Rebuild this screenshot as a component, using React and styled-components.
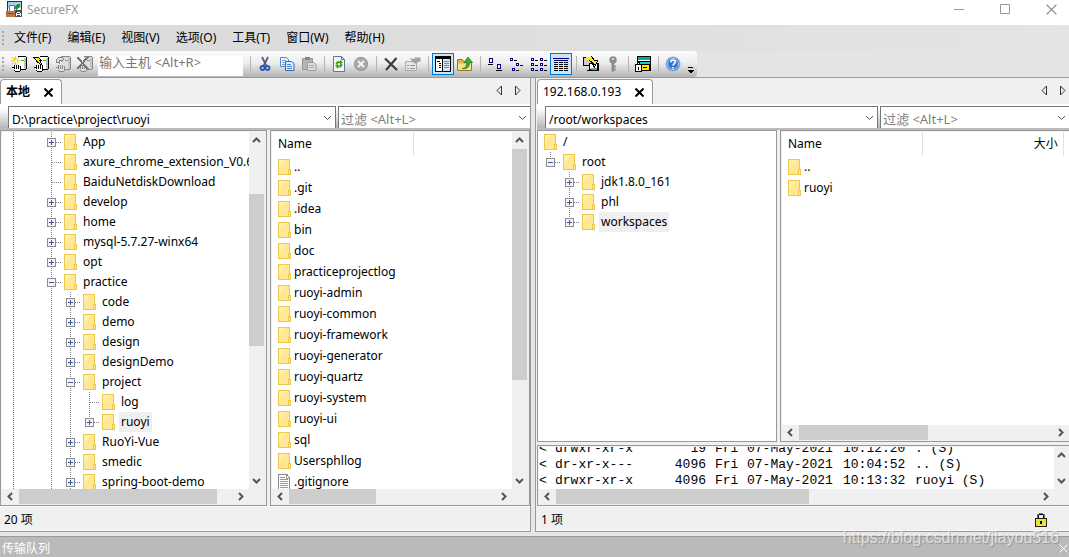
import React from 'react';
import styled, { createGlobalStyle } from 'styled-components';

const GlobalStyle = createGlobalStyle`
  * {
    box-sizing: border-box;
  }

  body {
    margin: 0;
    overflow: hidden;
    background: #e3e3e3;
    color: #000;
    font-family: "Noto Sans", "Noto Sans CJK SC", sans-serif;
    font-size: 12px;
    line-height: 20px;
  }

  button, input {
    font: inherit;
    color: inherit;
    border: 0;
    padding: 0;
    margin: 0;
    background: none;
    border-radius: 0;
  }

  ul {
    list-style: none;
    margin: 0;
    padding: 0;
  }

  svg {
    display: block;
    flex: none;
  }
`;

/* ---------- frame ---------- */

const Window = styled.div`
  height: 100vh;
  display: flex;
  flex-direction: column;
`;

const TitleBar = styled.header`
  display: flex;
  align-items: flex-start;
  height: 25px;
  padding: 1px 0 0 6px;
  background: #fff;
  color: #999;

  h1 {
    flex: 1;
    margin: 0 0 0 5px;
    font-size: 12px;
    font-weight: 400;
    line-height: 18px;
  }
`;

const WindowButton = styled.button`
  width: 46px;
  height: 16px;
  display: flex;
  align-items: center;
  justify-content: center;

  &:last-child {
    width: 41px;
    padding-left: 18px;
    justify-content: flex-start;
  }
`;

const MenuBar = styled.nav`
  display: flex;
  align-items: center;
  gap: 16px;
  height: 26px;
  padding-left: 2px;
  background: linear-gradient(90deg, #dadada, #e4e4e4);
`;

const Grip = styled.span`
  width: 2px;
  height: 14px;
  flex: none;
  margin-right: ${(props) => props.$gap || 0}px;
  background: repeating-linear-gradient(#a8a8a8 0 2px, transparent 2px 4px);
`;

const ToolbarRow = styled.div`
  display: flex;
  height: 27px;
  background: #e4e4e4;
  border-bottom: 1px solid #9a9a9a;
`;

const Toolbar = styled.div`
  display: flex;
  align-items: center;
  height: 26px;
  padding-left: 2px;
  border-radius: 0 4px 4px 0;
  background: linear-gradient(#fcfcfc, #eee 45%, #b4b4b4);
`;

const ToolButton = styled.button`
  width: 22px;
  height: 22px;
  display: flex;
  align-items: center;
  justify-content: center;
  border: 1px solid ${(props) => (props.$active ? '#0078d7' : 'transparent')};
  background: ${(props) => (props.$active ? '#cfe3f5' : 'transparent')};
`;

const Separator = styled.span`
  width: 8px;
  height: 16px;
  background: linear-gradient(90deg, transparent 4px, #b5b5b5 4px, #b5b5b5 5px, transparent 5px);
`;

const HostInput = styled.input`
  width: 145px;
  height: 20px;
  margin: 3px 3px 0 2px;
  padding: 0 1px 8px;
  background: #fff;
  font-size: 13px;

  &::placeholder {
    color: #777;
    opacity: 1;
  }
`;

const Overflow = styled.button`
  width: 13px;
  height: 26px;
  display: flex;
  align-items: flex-end;
  justify-content: center;
  padding-bottom: 3px;
`;

/* ---------- panels ---------- */

const Workspace = styled.main`
  flex: 1;
  min-height: 0;
  display: grid;
  grid-template-columns: 531fr 534fr;
  grid-template-rows: minmax(0, 1fr);
  column-gap: 4px;
  padding-bottom: 4px;
  background: #e6e6e6;
`;

const Panel = styled.section`
  min-width: 0;
  display: flex;
  flex-direction: column;
  background: #f0f0f0;
  border: solid #999;
  border-width: ${(props) => (props.$remote ? '0 0 1px 1px' : '0 1px 1px 0')};
  padding-left: ${(props) => (props.$remote ? 1 : 0)}px;
`;

const TabRow = styled.div`
  display: flex;
  align-items: flex-end;
  justify-content: space-between;
  height: 26px;
`;

const Tab = styled.div`
  display: flex;
  align-items: center;
  gap: 14px;
  height: 25px;
  padding: 0 8px 0 5px;
  background: #fff;
  border: 1px solid #999;
  border-bottom: 0;
  border-radius: 4px 4px 0 0;
  font-weight: ${(props) => (props.$active ? 700 : 400)};
`;

const TabArrows = styled.div`
  display: flex;
  gap: 9px;
  padding: 0 ${(props) => (props.$active ? 8 : 2)}px 9px 0;

  button {
    width: 9px;
    height: 9px;
  }
`;

const AddressBar = styled.div`
  display: grid;
  grid-template-columns: ${(props) => props.$columns};
  column-gap: 2px;
  height: 26px;
  padding: 2px 0 0 8px;
  background: linear-gradient(#fff 2px, #fafafa 6px, #b6b6b6);
  border-bottom: 2px solid #bbb;
`;

const Combo = styled.div`
  display: flex;
  align-items: center;
  min-width: 0;
  background: #fff;
  border: solid #777;
  border-width: 1px 0 0 1px;

  &:not(:last-child) {
    border-right-width: 1px;
  }

  input {
    flex: 1;
    min-width: 0;
    height: 20px;
    padding: 4px 3px 0;
    outline: none;
  }

  input[placeholder] {
    padding: 3px 2px 0;
    font-size: 13px;
  }

  input::placeholder {
    color: #808080;
    opacity: 1;
  }

  button {
    width: 16px;
    height: 20px;
    display: flex;
    align-items: center;
    justify-content: center;
  }
`;

const Panes = styled.div`
  flex: 1;
  min-height: 0;
  display: grid;
  grid-template-columns: ${(props) => props.$columns};
  grid-template-rows: minmax(0, 1fr);
  column-gap: 3px;
`;

const Pane = styled.div`
  min-width: 0;
  min-height: 0;
  display: grid;
  grid-template-columns: minmax(0, 1fr) ${(props) => (props.$vertical ? '15px' : '')};
  grid-template-rows: minmax(0, 1fr) ${(props) => (props.$horizontal ? '15px' : '')};
  padding: 1px ${(props) => (props.$vertical && !props.$cut ? 2 : 0)}px 1px 1px;
  background: ${(props) => (props.$vertical || props.$horizontal ? '#f0f0f0' : '#fff')};
  border: 1px solid #999;
  border-right-width: ${(props) => (props.$cut ? 0 : 1)}px;
`;

const Content = styled.div`
  overflow: hidden;
  background: #fff;
`;

const Status = styled.footer`
  display: flex;
  align-items: center;
  justify-content: space-between;
  height: 25px;
  padding: 2px 22px 0 4px;
  border: solid #fafafa;
  border-width: 1px 0;
`;

const Queue = styled.footer`
  display: flex;
  align-items: center;
  justify-content: space-between;
  height: 21px;
  padding: 3px 1px 0 2px;
  background: #bababa;
  border-top: 1px solid #999;
  color: #fff;
`;

const Watermark = styled.div`
  position: absolute;
  right: 10px;
  bottom: 8px;
  color: rgba(255, 255, 255, 0.65);
  text-shadow: 1px 1px 1px rgba(110, 110, 110, 0.5);
  font: 16px/22px "Liberation Sans", sans-serif;
  pointer-events: none;
`;

/* ---------- scrollbar ---------- */

const Bar = styled.div`
  display: flex;
  flex-direction: ${(props) => (props.$vertical ? 'column' : 'row')};
  background: #f0f0f0;

  button {
    flex: none;
    width: ${(props) => (props.$vertical ? 15 : 17)}px;
    height: ${(props) => (props.$vertical ? 17 : 15)}px;
    display: flex;
    align-items: center;
    justify-content: center;
  }
`;

const Space = styled.span`
  flex: ${(props) => props.$grow} 1 0;
`;

const Thumb = styled(Space)`
  background: #cdcdcd;
`;

const chevrons = {
  up: 'M1 6 4.500 2.500 8 6',
  down: 'M1 3 4.500 6.500 8 3',
  left: 'M6 1 2.500 4.500 6 8',
  right: 'M3 1 6.500 4.500 3 8',
};

const Chevron = ({ to, width = 2, color = '#555' }) => (
  <svg width="9" height="9" viewBox="0 0 9 9" fill="none" stroke={color} strokeWidth={width}>
    <path d={chevrons[to]} />
  </svg>
);

// track is [before, thumb, after], as parts of the whole
const ScrollBar = ({ vertical, track }) => (
  <Bar $vertical={vertical}>
    <button aria-label={vertical ? 'Scroll up' : 'Scroll left'}>
      <Chevron to={vertical ? 'up' : 'left'} />
    </button>
    <Space $grow={track[0]} />
    <Thumb $grow={track[1]} />
    <Space $grow={track[2]} />
    <button aria-label={vertical ? 'Scroll down' : 'Scroll right'}>
      <Chevron to={vertical ? 'down' : 'right'} />
    </button>
  </Bar>
);

/* ---------- tree and file list ---------- */

const TreeList = styled.ul`
  padding-left: 2px;
`;

const TreeRow = styled.li`
  display: flex;
  align-items: center;
  height: 20px;
  white-space: nowrap;
`;

const TreeLabel = styled.span`
  padding: 0 2px;
  margin-left: 1px;
  background: ${(props) => (props.$selected ? '#efefef' : 'transparent')};
`;

const IconCell = styled.span`
  flex: none;
  width: 19px;
  padding-left: 3px;
`;

const Guide = ({ kind }) => {
  const node = kind !== 'line' && kind !== 'none';
  const last = kind.endsWith('-last');
  const sign = kind.replace('-last', '');
  return (
    <svg width="19" height="20" viewBox="0 0 19 20" shapeRendering="crispEdges">
      {kind !== 'none' && (
        <path d={last ? 'M9.500 0V10' : 'M9.500 0V20'} stroke="#808080" strokeDasharray="1 1" />
      )}
      {node && <path d="M10 10.500H19" stroke="#808080" strokeDasharray="1 1" />}
      {(sign === 'plus' || sign === 'minus') && (
        <>
          <rect x="5.500" y="6.500" width="8" height="8" rx="1" fill="#f4f4f4" stroke="#8c8c8c" />
          <path d="M7 10.500H12" stroke="#3a57a5" />
          {sign === 'plus' && <path d="M9.500 8V13" stroke="#3a57a5" />}
        </>
      )}
    </svg>
  );
};

const Folder = () => (
  <svg width="13" height="16" viewBox="0 0 13 16" shapeRendering="crispEdges">
    <rect x="0.500" y="0.500" width="11" height="15" fill="#ffe794" stroke="#ecc94b" />
    <path d="M1 10V1h7z" fill="#ffefab" />
    <rect x="10.500" y="10.500" width="2" height="5" fill="#ffe794" stroke="#ecc94b" />
  </svg>
);

const TextFile = () => (
  <svg width="13" height="16" viewBox="0 0 13 16" shapeRendering="crispEdges">
    <path d="M.5.5H9l2.500 3v12H.5z" fill="#fff" stroke="#8a8a8a" />
    <path d="M8.500 1v3H11M2 3.500h5M2 5.500h8M2 7.500h8M2 9.500h8M2 11.500h8M2 13.500h8" stroke="#999" fill="none" />
  </svg>
);

const Tree = ({ nodes }) => (
  <TreeList>
    {nodes.map(([guides, name, selected]) => (
      <TreeRow key={name}>
        {guides.map((kind, i) => <Guide key={i} kind={kind} />)}
        <IconCell><Folder /></IconCell>
        <TreeLabel $selected={selected}>{name}</TreeLabel>
      </TreeRow>
    ))}
  </TreeList>
);

const Table = styled.table`
  width: 100%;
  table-layout: fixed;
  border-collapse: collapse;

  th, td {
    padding: 0 0 0 6px;
    text-align: left;
    font-weight: 400;
    white-space: nowrap;
  }

  th {
    height: 24px;
    padding-bottom: 1px;
    border-right: 1px solid #e2e2e2;
  }

  th:last-child {
    border-right: 0;
  }

  td {
    height: 21px;
  }
`;

const SizeHead = styled.th`
  && {
    padding-right: 5px;
    text-align: right;
    border-right: 1px solid #e2e2e2;
  }
`;

const FileName = styled.span`
  display: flex;
  align-items: center;
  gap: 3px;
`;

const FileTable = ({ files, children }) => (
  <Table>
    {children}
    <tbody>
      {files.map((name) => (
        <tr key={name}>
          <td>
            <FileName>
              {name === '.gitignore' ? <TextFile /> : <Folder />}
              {name}
            </FileName>
          </td>
        </tr>
      ))}
    </tbody>
  </Table>
);

/* ---------- log ---------- */

const LogPane = styled(Pane)`
  height: 61px;
  margin-top: 3px;
`;

const LogText = styled(Content)`
  display: flex;
  flex-direction: column;
  justify-content: flex-end;
  font: 13px/16px "Liberation Mono", monospace;
`;

const LogLine = styled.div`
  display: grid;
  grid-template-columns: 16px 80px 72px 32px 96px 72px auto;
  white-space: pre;

  span:nth-child(3) {
    text-align: right;
    padding-right: 1px;
  }

  span:nth-child(n + 4) {
    padding-left: 8px;
    margin-right: -8px;
  }
`;

/* ---------- toolbar icons ---------- */

const Icon = ({ children, size = 16 }) => (
  <svg width={size} height={size} viewBox="0 0 16 16" fill="none" shapeRendering="crispEdges">
    {children}
  </svg>
);

const Smooth = ({ children }) => (
  <svg width="16" height="16" viewBox="0 0 16 16" fill="none">{children}</svg>
);

const Host = ({ off, children }) => (
  <Icon>
    <path d="M7 1h8v12H7z" fill={off ? '#ddd' : '#fff'} />
    <path d="M13 2h2v11h-2z" fill={off ? '#c4c4c4' : '#c0c0c0'} />
    <path d="M7 .5h8M15.500 1v12M9 13.500h6" stroke={off ? '#888' : '#000'} />
    <path d="M10 4h3v1h-3z" fill={off ? '#999' : '#00d800'} />
    <path d="M2 10h1v-1h6v1h1v5H4v-2H2z" fill={off ? '#ddd' : '#fff'} />
    <path d="M1 11.500h2M3.500 9v4M5.500 9v4M7.500 9v4M9.500 10v5M4 15.500h5M3.500 14v1" stroke={off ? '#888' : '#000'} />
    {children}
  </Icon>
);

const icons = {
  connect: (
    <Host>
      <path d="M1 1l7 6M8 1 1 8M4.500 0v9M0 4.500h9" stroke="#e6d800" />
      <path d="M4 4h2v2H4z" fill="#fff" />
    </Host>
  ),
  quick: (
    <Host>
      <path d="M.5 1.500h5l3 3h-2l3 5-6-4h1z" fill="#ffef00" stroke="#000" />
    </Host>
  ),
  reconnect: (
    <Host off>
      <path d="M1 6c0-4 3-5 5-5V0l3 3-3 3V4C4 4 4 5 4 7z" fill="#ddd" stroke="#888" />
    </Host>
  ),
  disconnect: (
    <Host off>
      <path d="M0 1l11 12M11 1 0 13" stroke="#777" strokeWidth="2" />
    </Host>
  ),
  cut: (
    <Smooth>
      <path d="M5 1l4.500 9M11 1 6.500 10" stroke="#51617a" strokeWidth="1.800" />
      <circle cx="5.500" cy="12" r="2" stroke="#2357b8" strokeWidth="1.800" />
      <circle cx="10.500" cy="12" r="2" stroke="#2357b8" strokeWidth="1.800" />
    </Smooth>
  ),
  copy: (
    <Smooth>
      <path d="M1.500 1.500h6l2 2v7h-8z" fill="#eaf2fd" stroke="#5b86c4" />
      <path d="M3 4.500h4M3 6.500h4M3 8.500h3" stroke="#7ba3dc" />
      <path d="M6.500 5.500h6l2.500 2v7H6.500z" fill="#dce9fb" stroke="#3667b0" />
      <path d="M8 8.500h4M8 10.500h5M8 12.500h5" stroke="#5888d0" />
    </Smooth>
  ),
  paste: (
    <Smooth>
      <path d="M1.500 2.500h10v11h-10z" fill="#b4b4b4" stroke="#969696" />
      <path d="M4 1h5v3H4z" fill="#888" />
      <path d="M6.500 6.500h6l2.500 2v6H6.500z" fill="#e0e0e0" stroke="#999" />
      <path d="M8 9.500h5M8 11.500h5" stroke="#aaa" />
    </Smooth>
  ),
  refresh: (
    <Smooth>
      <path d="M2.500.5h8l3 3v12h-11z" fill="#f3f8ff" stroke="#5779a8" />
      <path d="M10.500.5v3h3" stroke="#5779a8" />
      <path d="M4.500 8.500c0-3 2-4 4.500-3.500V3.500L12 6.500 9 9V7.200C7.500 7 7 7.500 6.700 8.500z" fill="#54a51c" />
      <path d="M11.500 8c0 3-2 4-4.500 3.500V13l-3-3 3-2.500v1.800c1.500.2 2-.3 2.300-1.300z" fill="#54a51c" />
    </Smooth>
  ),
  stop: (
    <Smooth>
      <circle cx="8" cy="8" r="7" fill="#a9a9a9" />
      <circle cx="8" cy="8" r="6.500" stroke="#969696" />
      <path d="M5 5l6 6M11 5l-6 6" stroke="#f4f4f4" strokeWidth="2" />
    </Smooth>
  ),
  remove: (
    <Smooth>
      <path d="M2 2.500 14 14M13.500 2 3 14" stroke="#3b3b3b" strokeWidth="2.200" />
    </Smooth>
  ),
  properties: (
    <Smooth>
      <path d="M.5 5.500h11v9H.5z" fill="#e6e6e6" stroke="#aaa" />
      <path d="M2 9.500h2M5 9.500h5M2 12.500h2M5 12.500h5" stroke="#999" />
      <path d="M5 2l4 1 1-1.500h5.500v4L13 6l-2 2-4-2.500z" fill="#a2a2a2" />
    </Smooth>
  ),
  panes: (
    <Icon>
      <path d="M.5.5h15v15H.5z" fill="#fff" stroke="#000" />
      <path d="M1 2h15" stroke="#000" strokeWidth="2" />
      <path d="M7.500 3v12" stroke="#000" />
      <path d="M2 5.500h3M4 7.500h2M4 9.500h2M4 11.500h2" stroke="#000" />
      <path d="M8 3h7v12H8z" fill="#dce4f0" />
      <path d="M9 5.500h5M9 7.500h5M9 9.500h5M9 11.500h5" stroke="#7c8aa8" />
    </Icon>
  ),
  up: (
    <Smooth>
      <path d="M.5 3.500h5l1 2h8v9H.5z" fill="#e2b64a" stroke="#9b7921" />
      <path d="M1 7.500h13v6.500H1z" fill="#fbe08b" />
      <path d="M5 12.500c3.500 0 4.500-2 4.500-6H7L11 1l4.500 5.500h-3c0 5-3 7-7.500 6z" fill="#3eab32" stroke="#25751e" strokeWidth=".7" />
    </Smooth>
  ),
  large: (
    <Icon>
      <path d="M2.500 2.500h3v4h-3zM10.500 8.500h3v4h-3z" fill="#fff" stroke="#000080" />
      <path d="M1 8.500h5M9 14.500h6" stroke="#000" />
    </Icon>
  ),
  small: (
    <Icon>
      <path d="M1.500 2.500h2v2h-2zM7.500 7.500h2v2h-2zM3.500 12.500h2v2h-2z" fill="#fff" stroke="#000080" />
      <path d="M5 4.500h3M11 9.500h3M7 14.500h3" stroke="#000" />
    </Icon>
  ),
  list: (
    <Icon>
      <path d="M.5 2.500h2v2h-2zM.5 7.500h2v2h-2zM.5 12.500h2v2h-2zM9.500 2.500h2v2h-2zM9.500 7.500h2v2h-2zM9.500 12.500h2v2h-2z" fill="#fff" stroke="#000080" />
      <path d="M4 4.500h3M4 9.500h3M4 14.500h3M13 4.500h3M13 9.500h3M13 14.500h3" stroke="#000" />
    </Icon>
  ),
  details: (
    <Icon>
      <path d="M0 2.500h16M1 4.500h14" stroke="#000080" />
      <path d="M1 6.500h4M6 6.500h4M11 6.500h4M1 8.500h4M6 8.500h4M11 8.500h4M1 10.500h4M6 10.500h4M11 10.500h4M1 12.500h4M6 12.500h4M11 12.500h4M1 14.500h4M6 14.500h4M11 14.500h4" stroke="#000" />
    </Icon>
  ),
  transfer: (
    <Icon>
      <path d="M.5 1.500h9v8h-9z" fill="#ccc" stroke="#000" />
      <path d="M6.500 7.500h8v6h-8z" fill="#fff" stroke="#000" />
      <path d="M3.500.5h5l3 4h3l-3 7-2-3h2l-5-4-5-1z" fill="#ffec00" />
      <path d="M8.500.5l3 4h3l-3 7-2-3h2l-5-4" stroke="#000" />
      <path d="M4 14.500h12M15.500 7v8" stroke="#000" />
      <path d="M8 12h6v2H8z" fill="#6fa36f" />
    </Icon>
  ),
  key: (
    <Smooth>
      <circle cx="8" cy="4" r="3.700" fill="#8d8d8d" />
      <circle cx="8" cy="3" r="1" fill="#eee" />
      <path d="M6.500 7h3v8l-1.500 1-1.500-1z" fill="#8d8d8d" />
      <path d="M9 10.500h2M9 13.500h2" stroke="#8d8d8d" strokeWidth="1.500" />
    </Smooth>
  ),
  session: (
    <Icon>
      <path d="M2.500.5h13v14h-13z" fill="#fff" stroke="#000" />
      <path d="M3 1h12v3H3z" fill="#00a8a8" />
      <path d="M3 5.500h12" stroke="#000" />
      <path d="M4 6h11v2H4z" fill="#20c8c8" />
      <path d="M.5 8.500h6v7h-6z" fill="#f4f4f4" stroke="#000" />
      <path d="M2.500 8V6.500h2V8M3.500 11v3" stroke="#000" />
      <path d="M6.500 8.500h8v6h-8z" fill="#ffe900" stroke="#000" />
      <path d="M8 11.500h4" stroke="#000" />
    </Icon>
  ),
  help: (
    <Smooth>
      <circle cx="8" cy="8" r="7" fill="#3775d3" stroke="#8eafdf" />
      <circle cx="8" cy="8" r="5.500" stroke="#d9e8fc" strokeWidth=".8" />
      <path d="M5.800 6.200c0-3 4.500-2.700 4.500-.2 0 1.500-2.200 1.700-2.200 3.500M8 11v1.500" stroke="#fff" strokeWidth="1.700" />
    </Smooth>
  ),
};

const AppIcon = () => (
  <Icon>
    <path d="M1.500.5h14v14h-14z" fill="#eef6ff" stroke="#28303c" />
    <path d="M2 1h13v6H2z" fill="#a7d0f5" />
    <path d="M8 7l3-4h3v3l-4 3z" fill="#159b2c" />
    <path d="M3 4h5v6H3z" fill="#fff" stroke="#777" />
    <path d="M0 10h9v6H0z" fill="#b9784a" />
    <path d="M0 12.500h8" stroke="#8b5128" />
    <path d="M9 9h7v7H9z" fill="#4b4f55" />
    <path d="M11 11.500h3M10.500 12v3M14.500 12v3M11 13.500h3" stroke="#fff" />
  </Icon>
);

const Lock = () => (
  <svg width="12" height="14" viewBox="0 0 12 14" fill="none" shapeRendering="crispEdges">
    <path d="M3.500 7V2.500l1-1h3l1 1V7" stroke="#000" />
    <path d="M2.500 6V2l2-1.500h3L9.500 2v4" stroke="#777" />
    <path d="M.5 5.500h11v8H.5z" fill="#e8e337" stroke="#222" />
    <path d="M5 8h2v3H5z" fill="#000" />
  </svg>
);

const Cross = ({ size = 9, color = '#000', width = 2 }) => (
  <svg width={size} height={size} viewBox="0 0 9 9" stroke={color} strokeWidth={width}>
    <path d="M.5.5l8 8M8.500.5l-8 8" />
  </svg>
);

const Arrow = ({ left }) => (
  <svg width="9" height="9" viewBox="0 0 9 9" fill="none" stroke="#333">
    <path d={left ? 'M6.500 0v9L2 4.500z' : 'M2.500 0v9L7 4.500z'} />
  </svg>
);

/* ---------- data ---------- */

const menus = ['文件(F)', '编辑(E)', '视图(V)', '选项(O)', '工具(T)', '窗口(W)', '帮助(H)'];

const hostTools = ['connect', 'quick', 'reconnect', 'disconnect'];

const toolGroups = [
  ['cut', 'copy', 'paste'],
  ['refresh', 'stop'],
  ['remove', 'properties'],
  ['panes', 'up'],
  ['large', 'small', 'list', 'details'],
  ['transfer', 'key'],
  ['session'],
  ['help'],
];

const activeTools = ['panes', 'details'];

const top = ['line', 'none'];
const sub = [...top, 'line'];

const localTree = [
  [[...top, 'plus'], 'App'],
  [[...top, 'tee'], 'axure_chrome_extension_V0.6.3'],
  [[...top, 'tee'], 'BaiduNetdiskDownload'],
  [[...top, 'plus'], 'develop'],
  [[...top, 'plus'], 'home'],
  [[...top, 'plus'], 'mysql-5.7.27-winx64'],
  [[...top, 'plus'], 'opt'],
  [[...top, 'minus'], 'practice'],
  [[...sub, 'plus'], 'code'],
  [[...sub, 'plus'], 'demo'],
  [[...sub, 'plus'], 'design'],
  [[...sub, 'plus'], 'designDemo'],
  [[...sub, 'minus'], 'project'],
  [[...sub, 'line', 'tee'], 'log'],
  [[...sub, 'line', 'plus-last'], 'ruoyi', true],
  [[...sub, 'plus'], 'RuoYi-Vue'],
  [[...sub, 'plus'], 'smedic'],
  [[...sub, 'plus'], 'spring-boot-demo'],
];

const remoteTree = [
  [[], '/'],
  [['minus-last'], 'root'],
  [['none', 'plus'], 'jdk1.8.0_161'],
  [['none', 'plus'], 'phl'],
  [['none', 'plus-last'], 'workspaces', true],
];

const localFiles = [
  '..', '.git', '.idea', 'bin', 'doc', 'practiceprojectlog', 'ruoyi-admin', 'ruoyi-common',
  'ruoyi-framework', 'ruoyi-generator', 'ruoyi-quartz', 'ruoyi-system', 'ruoyi-ui', 'sql',
  'Usersphllog', '.gitignore',
];

const log = [
  ['<', 'drwxr-xr-x', '19', 'Fri', '07-May-2021', '10:12:20', '. (S)'],
  ['<', 'dr-xr-x---', '4096', 'Fri', '07-May-2021', '10:04:52', '.. (S)'],
  ['<', 'drwxr-xr-x', '4096', 'Fri', '07-May-2021', '10:13:32', 'ruoyi (S)'],
];

/* ---------- app ---------- */

const Tool = ({ name }) => {
  const active = activeTools.includes(name);
  return (
    <ToolButton $active={active} aria-label={name} aria-pressed={active}>
      {icons[name]}
    </ToolButton>
  );
};

const Tabs = ({ title, active }) => (
  <TabRow>
    <Tab $active={active}>
      {title}
      <button aria-label="Close tab"><Cross /></button>
    </Tab>
    <TabArrows $active={active}>
      <button aria-label="Previous tab"><Arrow left /></button>
      <button aria-label="Next tab"><Arrow /></button>
    </TabArrows>
  </TabRow>
);

const Address = ({ path, columns }) => (
  <AddressBar $columns={columns}>
    <Combo>
      <input aria-label="Path" defaultValue={path} />
      <button aria-label="Show paths"><Chevron to="down" width={1} /></button>
    </Combo>
    <Combo>
      <input aria-label="Filter" placeholder="过滤 <Alt+L>" />
      <button aria-label="Show filters"><Chevron to="down" width={1} /></button>
    </Combo>
  </AddressBar>
);

const LocalPanel = () => (
  <Panel>
    <Tabs title="本地" active />
    <Address path="D:\practice\project\ruoyi" columns="328fr 192fr" />
    <Panes $columns="267fr 260fr">
      <Pane $vertical $horizontal>
        <Content><Tree nodes={localTree} /></Content>
        <ScrollBar vertical track={[45, 152, 126]} />
        <ScrollBar track={[0, 198, 15]} />
      </Pane>
      <Pane $vertical $horizontal>
        <Content>
          <FileTable files={localFiles}>
            <colgroup>
              <col style={{ width: '59%' }} />
              <col />
            </colgroup>
            <thead>
              <tr>
                <th scope="col">Name</th>
                <th aria-hidden="true" />
              </tr>
            </thead>
          </FileTable>
        </Content>
        <ScrollBar vertical track={[0, 231, 92]} />
        <ScrollBar track={[0, 87, 119]} />
      </Pane>
    </Panes>
    <Status>20 项</Status>
  </Panel>
);

const RemotePanel = () => (
  <Panel $remote>
    <Tabs title="192.168.0.193" />
    <Address path="/root/workspaces" columns="333fr 189fr" />
    <Panes $columns="240fr 289fr">
      <Pane>
        <Content><Tree nodes={remoteTree} /></Content>
      </Pane>
      <Pane $horizontal $cut>
        <Content>
          <FileTable files={['..', 'ruoyi']}>
            <colgroup>
              <col style={{ width: '49%' }} />
              <col style={{ width: '49%' }} />
              <col />
            </colgroup>
            <thead>
              <tr>
                <th scope="col">Name</th>
                <SizeHead scope="col">大小</SizeHead>
                <th aria-hidden="true" />
              </tr>
            </thead>
          </FileTable>
        </Content>
        <ScrollBar track={[0, 130, 124]} />
      </Pane>
    </Panes>
    <LogPane $vertical $horizontal $cut>
      <LogText>
        {log.map((fields) => (
          <LogLine key={fields[5]}>
            {fields.map((field, i) => <span key={i}>{field}</span>)}
          </LogLine>
        ))}
      </LogText>
      <ScrollBar vertical track={[0, 0, 1]} />
      <ScrollBar track={[0, 253, 228]} />
    </LogPane>
    <Status>
      1 项
      <Lock />
    </Status>
  </Panel>
);

const App = () => {
  return (
    <>
      <GlobalStyle />
      <Window>
        <TitleBar>
          <AppIcon />
          <h1>SecureFX</h1>
          <WindowButton aria-label="Minimize">
            <svg width="10" height="10"><path d="M0 5.500h10" stroke="#999" /></svg>
          </WindowButton>
          <WindowButton aria-label="Maximize">
            <svg width="10" height="10"><path d="M.5.5h9v9h-9z" fill="none" stroke="#999" /></svg>
          </WindowButton>
          <WindowButton aria-label="Close"><Cross size={11} width={1} color="#888" /></WindowButton>
        </TitleBar>
        <MenuBar>
          <Grip $gap={-6} />
          {menus.map((menu) => <button key={menu}>{menu}</button>)}
        </MenuBar>
        <ToolbarRow>
          <Toolbar>
            <Grip $gap={4} />
            {hostTools.map((name) => <Tool key={name} name={name} />)}
            <HostInput aria-label="Host" placeholder="输入主机 <Alt+R>" />
            {toolGroups.map((group) => (
              <React.Fragment key={group[0]}>
                <Separator />
                {group.map((name) => <Tool key={name} name={name} />)}
              </React.Fragment>
            ))}
            <Overflow aria-label="More tools">
              <svg width="7" height="7" shapeRendering="crispEdges">
                <path d="M1 .5h5" stroke="#000" />
                <path d="M0 3h7L3.500 6.500z" />
              </svg>
            </Overflow>
          </Toolbar>
        </ToolbarRow>
        <Workspace>
          <LocalPanel />
          <RemotePanel />
        </Workspace>
        <Queue>
          传输队列
          <button aria-label="Close queue"><Cross width={1} color="#fff" /></button>
        </Queue>
        <Watermark>https://blog.csdn.net/jiayou516</Watermark>
      </Window>
    </>
  );
};

export default App;
